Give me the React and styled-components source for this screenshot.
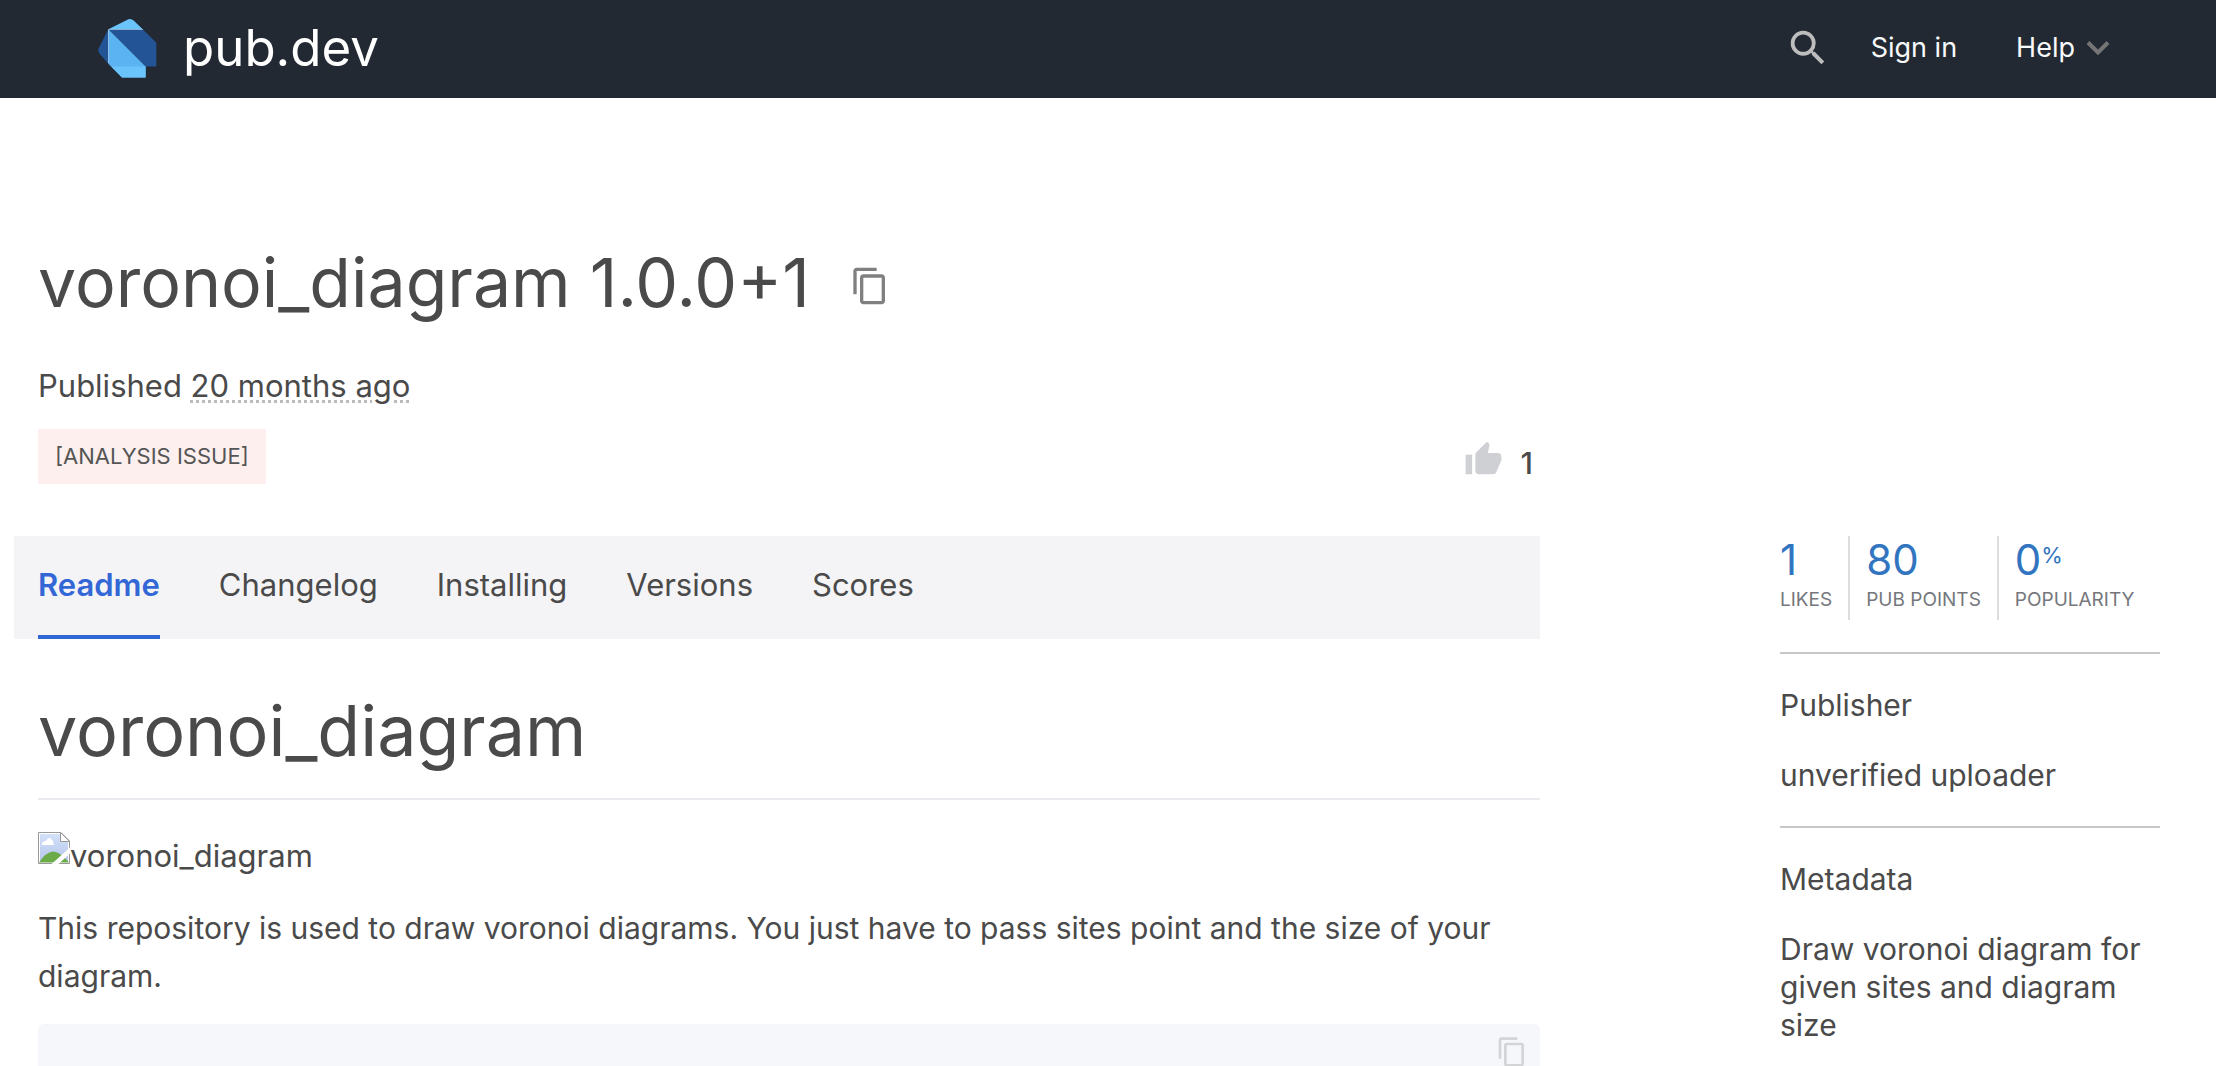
import React from "react";
import styled, { createGlobalStyle } from "styled-components";

const GlobalStyle = createGlobalStyle`
  *, *::before, *::after { box-sizing: border-box; }
  body {
    margin: 0;
    background: #fff;
    color: #4a4a4a;
    font-family: Inter, "Liberation Sans", sans-serif;
    font-size: 30px;
    line-height: 40px;
  }
  h1, h2, h3, p { margin: 0; font-weight: 400; }
  a { color: inherit; text-decoration: none; }
  button { border: 0; padding: 0; background: none; color: inherit; font: inherit; cursor: pointer; }
  svg { display: block; flex: none; }
`;

const Page = styled.div`
  height: 100vh;
  overflow: hidden;
`;

const Header = styled.header`
  display: flex;
  align-items: center;
  justify-content: space-between;
  height: 98px;
  padding: 0 106px 2px 98px;
  background: #222933;
  color: #f8f9fa;
`;

const Brand = styled.a`
  display: flex;
  align-items: center;
  gap: 26px;
  font-size: 51px;
  line-height: 60px;
  color: #fff;
`;

const Nav = styled.nav`
  display: flex;
  align-items: center;
  font-size: 27px;
`;

const SearchButton = styled.button`
  margin-right: 40px;
  color: #bdbdbd;
`;

const HelpButton = styled.button`
  display: flex;
  align-items: center;
  gap: 11px;
  margin-left: 59px;
`;

const Layout = styled.div`
  display: flex;
  align-items: flex-start;
  gap: 240px;
  padding: 144px 56px 0 38px;
`;

const Main = styled.main`
  flex: 1;
  min-width: 0;
`;

const TitleRow = styled.div`
  display: flex;
  align-items: center;
  gap: 40px;
`;

const Title = styled.h1`
  font-size: 68px;
  line-height: 80px;
`;

const CopyButton = styled.button`
  padding-top: ${p => (p.$lowered ? "8px" : "0")};
  color: ${p => p.$color};
`;

const Published = styled.p`
  margin-top: 44px;
  font-size: 31px;
`;

const Age = styled.span`
  text-decoration: underline dotted #bbb 3px;
  text-underline-offset: 3px;
`;

const MetaRow = styled.div`
  display: flex;
  align-items: flex-end;
  justify-content: space-between;
  margin-top: 23px;
`;

const Badge = styled.a`
  padding: 12px 17px;
  background: #fcefee;
  color: #555;
  font-size: 22px;
  line-height: 31px;
`;

const LikeButton = styled.button`
  display: flex;
  align-items: flex-end;
  gap: 18px;
  padding: 0 7px 5px 0;
  line-height: 32px;
  font-weight: 500;
`;

const Tabs = styled.nav`
  display: flex;
  gap: 59px;
  margin: 52px 0 0 -24px;
  padding-left: 24px;
  background: #f4f4f7;
  font-size: 31px;
`;

const Tab = styled.a`
  padding: 29px 0 30px;
  border-bottom: 4px solid ${p => (p.$active ? "#3367d6" : "transparent")};
  color: ${p => (p.$active ? "#3367d6" : "inherit")};
  font-weight: ${p => (p.$active ? 600 : 400)};
`;

const ReadmeTitle = styled.h2`
  margin-top: 52px;
  padding-bottom: 27px;
  border-bottom: 2px solid #eaebf0;
  font-size: 70px;
  line-height: 80px;
`;

const MissingImage = styled.p`
  display: flex;
  margin-top: 32px;
  font-size: 31px;
  line-height: 48px;
`;

const Paragraph = styled.p`
  margin-top: 24px;
  line-height: 48px;
`;

const CodeBlock = styled.div`
  display: flex;
  justify-content: flex-end;
  margin-top: 24px;
  padding: 12px 12px 36px;
  border-radius: 6px;
  background: #f6f7fa;
`;

const Sidebar = styled.aside`
  flex: none;
  width: 380px;
  padding-top: 294px;
  line-height: 38px;
`;

const Scores = styled.a`
  display: flex;
`;

const Score = styled.div`
  padding: 0 16px 8px;
  border-left: 2px solid #ddd;
  &:first-child { padding-left: 0; border-left: 0; }
  &:last-child { padding-right: 0; }
`;

const ScoreValue = styled.div`
  display: flex;
  margin-bottom: 4px;
  color: #3175c0;
  font-size: 42px;
  line-height: 48px;
`;

const Percent = styled.span`
  font-size: 22px;
  line-height: 38px;
`;

const ScoreLabel = styled.div`
  color: #75777c;
  font-size: 19px;
  line-height: 24px;
  white-space: nowrap;
`;

const Section = styled.section`
  display: flex;
  flex-direction: column;
  gap: 32px;
  margin-top: 32px;
  padding-top: 32px;
  border-top: 2px solid #c8c8c8;
`;

const SectionTitle = styled.h3`
  font-size: 30px;
  line-height: 38px;
`;

const DartLogo = () => (
  <svg width="59" height="59" viewBox="0 0 59 59" aria-hidden="true">
    <path d="M10.3 10.3 0.6 29.4Q-0.4 32 1.4 34.6L10.3 44.7Z" fill="#235596" />
    <path d="M10.3 10.3 28.5 1.2Q32.5-1.2 35.6 1.6L44.7 10.3Z" fill="#6bc3fc" />
    <path d="M10.3 10.3H44.7L58.3 23.7V47.6H47.6Z" fill="#235596" />
    <path d="M10.3 10.3 47.6 47.6V58.6H24L10.3 44.7Z" fill="#5cb3f1" />
    <path d="M13.2 47.6H47.6V58.6H24Z" fill="#6bc3fc" />
    <path d="M10.5 44V10.5H45" fill="none" stroke="#b5d9f5" strokeWidth="0.7" />
  </svg>
);

const CopyIcon = ({ size }) => (
  <svg width={size} height={size} viewBox="0 0 24 24" fill="currentColor" aria-hidden="true">
    <path d="M16 1H4c-1.1 0-2 .9-2 2v14h2V3h12V1zm3 4H8c-1.1 0-2 .9-2 2v14c0 1.1.9 2 2 2h11c1.1 0 2-.9 2-2V7c0-1.1-.9-2-2-2zm0 16H8V7h11v14z" />
  </svg>
);

const SearchIcon = () => (
  <svg width="46" height="46" viewBox="0 0 24 24" fill="currentColor" aria-hidden="true">
    <path d="M15.5 14h-.79l-.28-.27A6.471 6.471 0 0 0 16 9.5 6.5 6.5 0 1 0 9.5 16c1.61 0 3.09-.59 4.23-1.57l.27.28v.79l5 4.99L20.49 19l-4.99-5zm-6 0C7.01 14 5 11.99 5 9.5S7.01 5 9.5 5 14 7.01 14 9.5 11.99 14 9.5 14z" />
  </svg>
);

const ChevronIcon = () => (
  <svg width="24" height="16" viewBox="0 0 24 16" aria-hidden="true">
    <path d="M2 2.5 12 12.5 22 2.5" fill="none" stroke="#757575" strokeWidth="4" />
  </svg>
);

const ThumbIcon = () => (
  <svg width="39" height="39" viewBox="0 0 24 24" fill="#cfd0d4" aria-hidden="true">
    <path d="M1 21h4V9H1v12zm22-11c0-1.1-.9-2-2-2h-6.31l.95-4.57.03-.32c0-.41-.17-.79-.44-1.06L14.17 1 7.59 7.59C7.22 7.95 7 8.45 7 9v10c0 1.1.9 2 2 2h9c.83 0 1.54-.5 1.84-1.22l3.02-7.05c.09-.23.14-.47.14-.73v-2z" />
  </svg>
);

const BrokenImageIcon = () => (
  <svg width="32" height="32" viewBox="0 0 32 32" role="img" aria-label="Missing image">
    <defs>
      <linearGradient id="sky" x1="0" y1="0" x2="0" y2="1">
        <stop offset="0" stopColor="#d3e1f8" />
        <stop offset="1" stopColor="#b5c5ec" />
      </linearGradient>
      <clipPath id="sheet"><path d="M0 0H23L32 9V32H0Z" /></clipPath>
    </defs>
    <path d="M0.5 0.5H23L31.5 9V31.5H0.5Z" fill="#fff" stroke="#999" />
    <g clipPath="url(#sheet)">
      <path d="M2 2H22V10H30V30H2Z" fill="url(#sky)" />
      <path d="M4 13q-.5-4 4-4 2.5-5 5.5-1.5 2.500 1 2 5.5Z" fill="#fff" />
      <path d="M1 30.500Q8 20 15 19.500 22 19.500 31 30.500Z" fill="#6bab48" />
      <path d="M13.5 32 32 15.500V21.500L20.500 32Z" fill="#fff" />
    </g>
    <path d="M22.5 0.5V9.5H31.500Z" fill="#fff" stroke="#999" />
  </svg>
);

const tabs = ["Readme", "Changelog", "Installing", "Versions", "Scores"];
const scores = [
  { value: "1", label: "LIKES" },
  { value: "80", label: "PUB POINTS" },
  { value: "0", unit: "%", label: "POPULARITY" },
];

export default function App() {
  return (
    <Page>
      <GlobalStyle />
      <Header>
        <Brand href="#home"><DartLogo />pub.dev</Brand>
        <Nav>
          <SearchButton aria-label="Search"><SearchIcon /></SearchButton>
          <a href="#signin">Sign in</a>
          <HelpButton>Help<ChevronIcon /></HelpButton>
        </Nav>
      </Header>
      <Layout>
        <Main>
          <TitleRow>
            <Title>voronoi_diagram 1.0.0+1</Title>
            <CopyButton $lowered $color="#808080" aria-label="Copy package name"><CopyIcon size={40} /></CopyButton>
          </TitleRow>
          <Published>Published <Age>20 months ago</Age></Published>
          <MetaRow>
            <Badge href="#analysis">[ANALYSIS ISSUE]</Badge>
            <LikeButton aria-label="Like, 1"><ThumbIcon />1</LikeButton>
          </MetaRow>
          <Tabs>
            {tabs.map((tab, i) => (
              <Tab key={tab} href={`#${tab.toLowerCase()}`} $active={i === 0}>{tab}</Tab>
            ))}
          </Tabs>
          <ReadmeTitle>voronoi_diagram</ReadmeTitle>
          <MissingImage><BrokenImageIcon />voronoi_diagram</MissingImage>
          <Paragraph>
            This repository is used to draw voronoi diagrams. You just have to pass sites point and the size of your diagram.
          </Paragraph>
          <CodeBlock>
            <CopyButton $color="#d3d4d6" aria-label="Copy code"><CopyIcon size={32} /></CopyButton>
          </CodeBlock>
        </Main>
        <Sidebar>
          <Scores href="#score">
            {scores.map(s => (
              <Score key={s.label}>
                <ScoreValue>{s.value}{s.unit && <Percent>{s.unit}</Percent>}</ScoreValue>
                <ScoreLabel>{s.label}</ScoreLabel>
              </Score>
            ))}
          </Scores>
          <Section>
            <SectionTitle>Publisher</SectionTitle>
            <p>unverified uploader</p>
          </Section>
          <Section>
            <SectionTitle>Metadata</SectionTitle>
            <p>Draw voronoi diagram for given sites and diagram size</p>
          </Section>
        </Sidebar>
      </Layout>
    </Page>
  );
}
